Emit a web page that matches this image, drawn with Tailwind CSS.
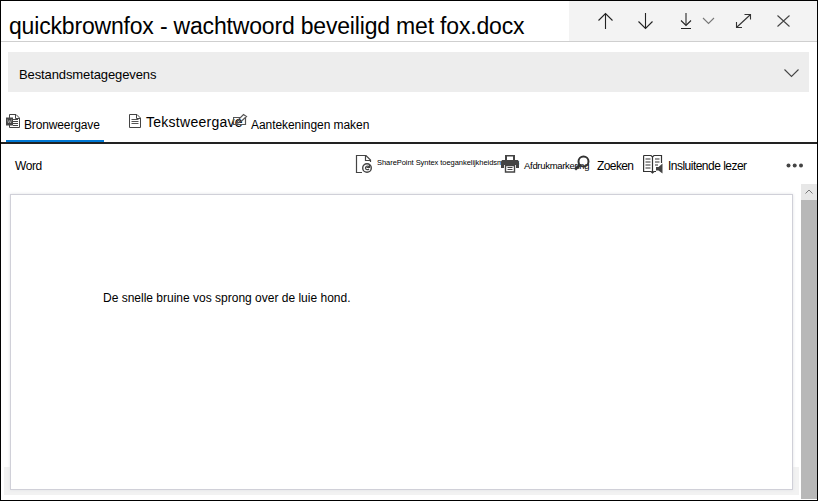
<!DOCTYPE html>
<html lang="nl">
<head>
<meta charset="utf-8">
<title>quickbrownfox</title>
<script src="https://cdn.jsdelivr.net/npm/@tailwindcss/browser@4"></script>
</head>
<body class="bg-white">
<div class="flex h-[501px] w-[818px] flex-col overflow-hidden border border-black bg-white font-['Liberation_Sans',Arial,sans-serif] text-black whitespace-nowrap">
  <header class="flex h-[41px] shrink-0 border-b border-[#cfcfcf]">
    <h1 class="w-[568px] pt-[10px] pl-2 text-[23px] leading-[30px]"><span class="tracking-[-0.18px]">quickbrownfox - wachtwoord beveiligd met fox.docx</span></h1>
    <div class="flex-1 bg-[#f3f3f3]">
      <svg class="block" width="248" height="40" viewBox="569 1 248 40" fill="none" stroke="#222" stroke-width="1.1">
        <path d="M605.5 29V13.5M598.500 20.500L605.500 13.500L612.500 20.500"/>
        <path d="M645.500 13V28.500M638.500 21.500L645.500 28.500L652.500 21.500"/>
        <path d="M686 13V25" stroke="#777" stroke-width="1.8"/><path d="M681 20.500L686 25.500L691 20.500M681 28.500H691"/>
        <path d="M703 18L708.500 23.500L714 18" stroke="#777"/>
        <path d="M737 27L750 15M744.500 14.500H750.500V19.500M736.500 22V27.500H742" stroke="#333"/>
        <path d="M777.500 15.500L789.500 26.500M789.500 15.500L777.500 26.500" stroke="#444"/>
      </svg>
    </div>
  </header>
  <section class="mt-[10px] mr-2 ml-[7px] flex h-10 shrink-0 justify-between bg-[#ededed] pt-[15px] pr-[9px] pl-[11px] text-[13px] leading-4">
    <span class="tracking-[-0.11px]">Bestandsmetagegevens</span>
    <svg width="17" height="12" viewBox="0 0 17 12" fill="none" stroke="#444" stroke-width="1.1"><path d="M1.500 2.500L8.500 9.500L15.500 2.500"/></svg>
  </section>
  <nav class="flex h-[52px] shrink-0 border-b-2 border-[#222] pl-[5px]">
    <div class="flex h-[50px] w-[98px] border-b-2 border-[#0078d4] pt-[21px]">
      <svg class="shrink-0" width="15" height="16" viewBox="6 113 15 16" fill="none" stroke="#444"><path d="M9.500 119V114.500H16L19.500 118V127.500H9.500V125M15.500 114.500V118.500H19.500M13 119.500H18M13 121.500H18M13 123.500H18M13 125.500H18"/><path d="M6 117.500H13V125.500H6Z" fill="#444" stroke="none"/><path d="M7.500 119.500L8.500 123L9.500 120.500L10.500 123L11.500 119.500" stroke="#bbb" stroke-width=".7"/></svg>
      <span class="mt-[4px] ml-[3px] text-[12px] leading-4"><span class="tracking-[-0.14px]">Bronweergave</span></span>
    </div>
    <div class="ml-[25px] flex w-[104px] pt-[21px]">
      <svg class="shrink-0" width="13" height="16" viewBox="129 113 13 16" fill="none" stroke="#444"><path d="M129.500 114.500H137L140.500 118V127.500H129.500ZM136.500 114.500V118.500H140.500"/><path d="M131.500 119.500H138.500M131.500 121.500H138.500M131.500 123.500H138.500" stroke="#555"/></svg>
      <span class="mt-[1px] ml-[4px] text-[14px] leading-4"><span class="tracking-[0.27px]">Tekstweergave</span></span>
    </div>
    <div class="flex pt-[21px]">
      <svg class="relative shrink-0" width="15" height="14" viewBox="233 113 15 14" fill="none" stroke="#555" stroke-width="1.2"><path d="M240 117.500H233.500V124.500H245.500V118"/><path d="M236.500 123.500L238 120L243.500 114.500L246.500 116.500L240.500 122ZM238 120L240.500 122"/></svg>
      <span class="mt-[4px] ml-[3px] text-[12px] leading-4"><span class="tracking-[-0.06px]">Aantekeningen maken</span></span>
    </div>
  </nav>
  <div class="flex h-10 shrink-0 pt-[10px] pl-[14px] leading-4">
    <span class="w-[340px] pt-[4px] text-[12px]"><span class="tracking-[-0.4px]">Word</span></span>
    <div class="flex w-[146px]">
      <svg class="shrink-0" width="18" height="20" viewBox="355 154 18 20" fill="none" stroke="#444" stroke-width="1.2"><path d="M362 172.500H356.500V155.500H366L370.500 160V162M365.500 155.500V160.500H370.500"/><circle cx="367" cy="168" r="4.300" stroke-width="1.400"/><path d="M369.500 167C367.500 165 365 166.500 365.500 168.500C366 170 368 170 369 169M369.500 164.500V167.500H366.500"/></svg>
      <span class="ml-[4px] w-[120px] pt-[1px] text-[7.500px]"><span class="tracking-[-0.05px]">SharePoint Syntex toegankelijkheidsmodus</span></span>
    </div>
    <div class="flex w-[73px]">
      <svg class="shrink-0" width="18" height="19" viewBox="501 154 18 19" fill="#444"><path d="M505 155H515V160H505Z"/><path d="M507 156.500H513V160H507Z" fill="#fff"/><path d="M502 160H518L519 162V168H516V165H504V168H501V162Z"/><path d="M505.500 165.500H514.500V172H505.500Z" fill="#fff" stroke="#444" stroke-width="1.400"/><path d="M507.500 167.500H512.500M507.500 169.500H512.500" stroke="#444"/></svg>
      <span class="ml-[5px] pt-[4px] text-[9.500px]"><span class="tracking-[-0.3px]">Afdrukmarkering</span></span>
    </div>
    <div class="flex w-[69px]">
      <svg class="relative shrink-0" width="16" height="18" viewBox="574 154 16 18" fill="none" stroke="#333" stroke-width="2"><circle cx="583.500" cy="161.500" r="5"/><path d="M580 165L575 169.500" stroke-width="3"/></svg>
      <span class="ml-[7px] pt-[4px] text-[12px]"><span class="tracking-[-0.6px]">Zoeken</span></span>
    </div>
    <div class="flex w-[143px]">
      <svg class="shrink-0" width="21" height="20" viewBox="643 154 21 20" fill="none" stroke="#333" stroke-width="1.200"><path d="M643.600 155.500H651L652.500 157L654 155.500H661.500V163M643.600 155.500V171.500H651L652.500 173L654 171.500H656M652.500 157V173M645.500 159H650.500M645.500 162H650.500M645.500 165H650.500M645.500 168H650.500M655 159H659.500M655 162H659.500M655 165H658"/><path d="M656 167H658.500L662.500 163.500V173.500L658.500 170.500H656Z" fill="#444" stroke="none"/></svg>
      <span class="ml-[4px] pt-[4px] text-[12px]"><span class="tracking-[-0.52px]">Insluitende lezer</span></span>
    </div>
    <svg class="shrink-0" width="18" height="20" viewBox="786 154 18 20" fill="#444"><circle cx="788.500" cy="165.500" r="2"/><circle cx="794.700" cy="165.500" r="2"/><circle cx="801" cy="165.500" r="2"/></svg>
  </div>
  <main class="flex min-h-0 flex-1">
    <div class="w-[800px] bg-[linear-gradient(#f2f2f2,#f2f2f2)] bg-size-[795px_28px] bg-position-[3px_283px] bg-no-repeat pt-[10px] pl-[9px]">
      <article class="h-[296px] w-[783px] border border-[#d0d0d8] bg-white pt-[95px] pl-[92px] text-[12px] leading-4 shadow-[0_0_3px_#dfe1e5]"><span>De snelle bruine vos sprong over de luie hond.</span></article>
    </div>
    <div class="h-[315px] w-4 bg-[#b8b8b8]">
      <div class="h-4 bg-[#e7e7e7]"><svg width="16" height="16" fill="none" stroke="#777"><path d="M4.500 9.500L8 6L11.500 9.500"/></svg></div>
    </div>
  </main>
</div>
</body>
</html>
